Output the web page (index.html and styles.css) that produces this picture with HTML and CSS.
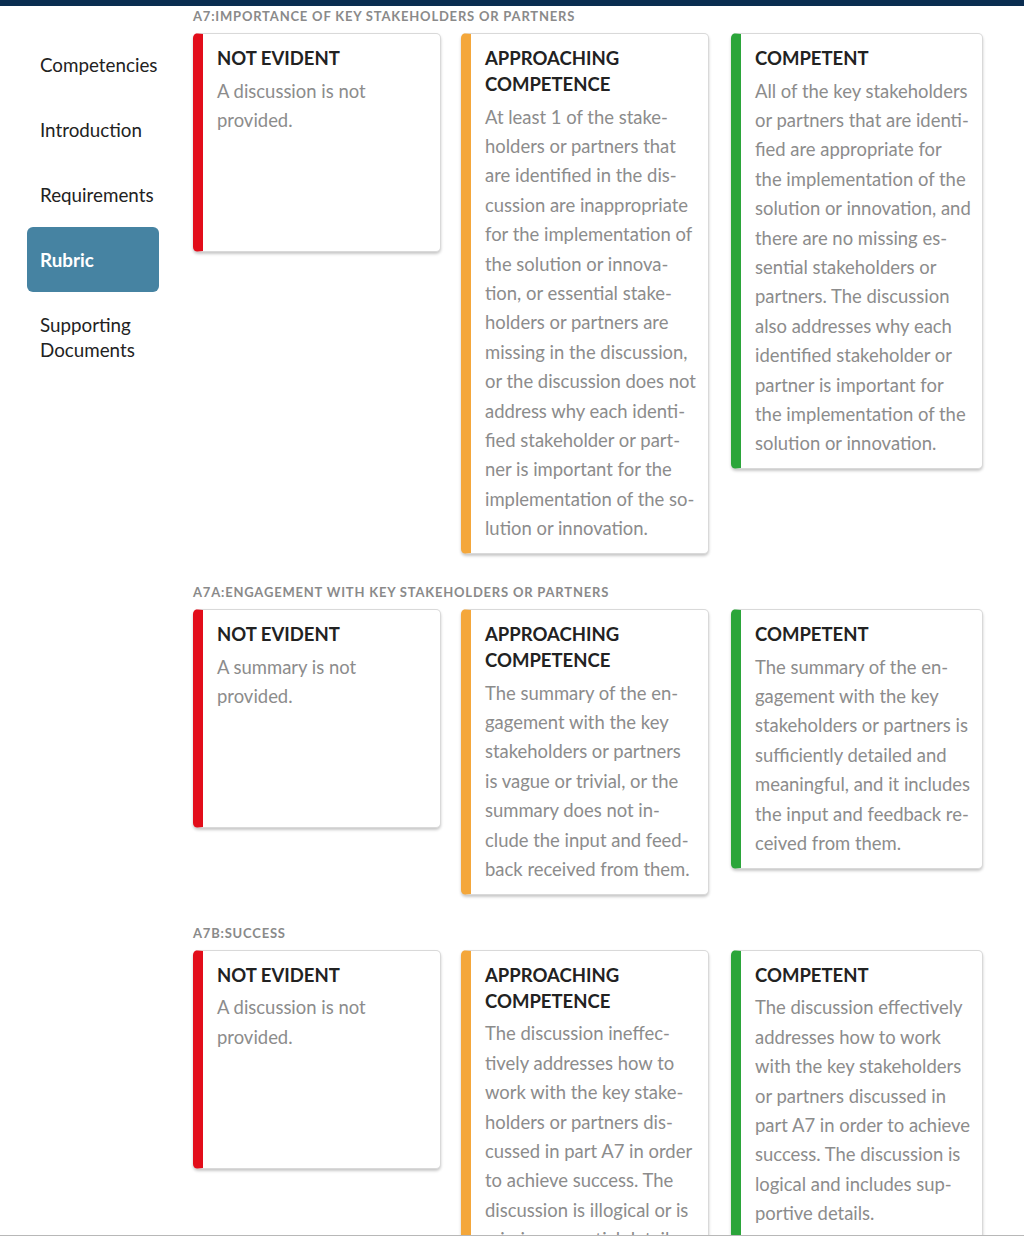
FILE: index.html
```html
<!DOCTYPE html>
<html lang="en">
<head>
<meta charset="utf-8">
<title>Rubric</title>
<link rel="stylesheet" href="styles.css">
</head>
<body>
<div class="topbar"></div>
<div class="page">
  <nav class="sidenav">
    <a class="navlink">Competencies</a>
    <a class="navlink">Introduction</a>
    <a class="navlink">Requirements</a>
    <a class="navlink active">Rubric</a>
    <a class="navlink">Supporting Documents</a>
  </nav>
  <main class="content">
    <section class="criterion">
      <h2 class="crit-title">A7:Importance of Key Stakeholders or Partners</h2>
      <div class="levels">
        <div class="card red">
          <h3 class="card-title">NOT EVIDENT</h3>
          <p class="card-text">A discussion is not provided.</p>
        </div>
        <div class="card orange">
          <h3 class="card-title">APPROACHING COMPETENCE</h3>
          <p class="card-text">At least 1 of the stake&shy;holders or partners that are identified in the dis&shy;cussion are inappropriate for the implementation of the solution or innova&shy;tion, or essential stake&shy;holders or partners are missing in the discussion, or the discussion does not address why each identi&shy;fied stakeholder or part&shy;ner is important for the implementation of the so&shy;lution or innovation.</p>
        </div>
        <div class="card green">
          <h3 class="card-title">COMPETENT</h3>
          <p class="card-text">All of the key stakeholders or partners that are identi&shy;fied are appropriate for the implementation of the solution or innovation, and there are no missing es&shy;sential stakeholders or partners. The discussion also addresses why each identified stakeholder or partner is important for the implementation of the solution or innovation.</p>
        </div>
      </div>
    </section>
    <section class="criterion">
      <h2 class="crit-title">A7A:Engagement with Key Stakeholders or Partners</h2>
      <div class="levels">
        <div class="card red">
          <h3 class="card-title">NOT EVIDENT</h3>
          <p class="card-text">A summary is not provided.</p>
        </div>
        <div class="card orange">
          <h3 class="card-title">APPROACHING COMPETENCE</h3>
          <p class="card-text">The summary of the en&shy;gagement with the key stakeholders or partners is vague or trivial, or the summary does not in&shy;clude the input and feed&shy;back received from them.</p>
        </div>
        <div class="card green">
          <h3 class="card-title">COMPETENT</h3>
          <p class="card-text">The summary of the en&shy;gagement with the key stakeholders or partners is sufficiently detailed and meaningful, and it includes the input and feedback re&shy;ceived from them.</p>
        </div>
      </div>
    </section>
    <section class="criterion">
      <h2 class="crit-title">A7B:Success</h2>
      <div class="levels">
        <div class="card red">
          <h3 class="card-title">NOT EVIDENT</h3>
          <p class="card-text">A discussion is not provided.</p>
        </div>
        <div class="card orange">
          <h3 class="card-title">APPROACHING COMPETENCE</h3>
          <p class="card-text">The discussion ineffec&shy;tively addresses how to work with the key stake&shy;holders or partners dis&shy;cussed in part A7 in order to achieve success. The discussion is illogical or is missing essential details.</p>
        </div>
        <div class="card green">
          <h3 class="card-title">COMPETENT</h3>
          <p class="card-text">The discussion effectively addresses how to work with the key stakeholders or partners discussed in part A7 in order to achieve success. The discussion is logical and includes sup&shy;portive details.</p>
        </div>
      </div>
    </section>
  </main>
</div>
<div class="bottom-rule"></div>
</body>
</html>
```
FILE: styles.css
```css
* { box-sizing: border-box; }

html, body {
  margin: 0;
  padding: 0;
  background: #ffffff;
}

body {
  font-family: Lato, "Open Sans", "Liberation Sans", sans-serif;
  color: #222222;
}

.topbar {
  height: 6px;
  background: #0a2d50;
}

.page {
  display: flex;
  align-items: flex-start;
}

.sidenav {
  width: 193px;
  flex: none;
  padding: 26px 0 0 27px;
  display: flex;
  flex-direction: column;
}

.navlink {
  display: block;
  width: 132px;
  padding: 20px 13px;
  font-size: 18.8px;
  line-height: 25px;
  color: #222222;
  border-radius: 6px;
  text-decoration: none;
}

.navlink.active {
  background: #4683a2;
  color: #ffffff;
  font-weight: 700;
}

.content {
  flex: 1;
  padding-top: 1px;
}

.criterion {
  margin-bottom: 29px;
}

.crit-title {
  margin: 0 0 8px 0;
  font-size: 13px;
  line-height: 18px;
  font-weight: 700;
  letter-spacing: 0.8px;
  text-transform: uppercase;
  color: #8a8a8a;
}

.levels {
  display: grid;
  grid-template-columns: 248px 248px 254px;
  column-gap: 20px;
  align-items: start;
}

.levels .card:nth-child(3) {
  margin-left: 2px;
}

.card {
  min-height: 219px;
  background: #ffffff;
  border: 1px solid #d9d9d9;
  border-left: 10px solid #e20d1a;
  border-radius: 5px;
  box-shadow: 0 2px 3px rgba(0, 0, 0, 0.22);
  padding: 11px 11.5px 9.5px 14px;
}

.levels .card:nth-child(3) {
  padding-right: 11px;
}

.card.red { border-left-color: #e20d1a; }
.card.orange { border-left-color: #f4a73b; }
.card.green { border-left-color: #2ba53a; }

.card-title {
  margin: 0;
  font-size: 18.5px;
  line-height: 26px;
  font-weight: 700;
  color: #222222;
}

.card-text {
  margin: 5.5px 0 0 0;
  font-size: 18.45px;
  line-height: 29.4px;
  color: #8c8c8c;
}

.bottom-rule {
  position: fixed;
  left: 0;
  right: 0;
  bottom: 0;
  height: 1px;
  background: #b8b8b8;
}
```
